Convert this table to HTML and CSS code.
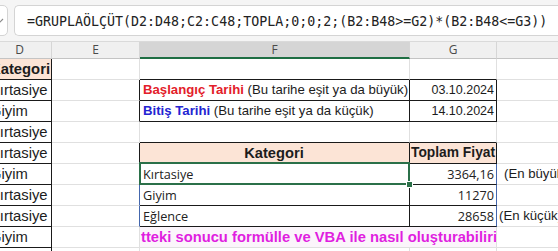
FILE: index.html
```html
<!DOCTYPE html>
<html lang="tr">
<head>
<meta charset="utf-8">
<title>Excel</title>
<link rel="stylesheet" href="styles.css">
</head>
<body>
<div class="app">
  <div class="topbar">
    <div class="namebox">
      <svg class="chev" width="8" height="8" viewBox="0 0 8 8"><polyline points="-3,2 1.5,6.5 6,2" fill="none" stroke="#8a8a8a" stroke-width="1.2"/></svg>
    </div>
    <div class="fbar">=GRUPLAÖLÇÜT(D2:D48;C2:C48;TOPLA;0;0;2;(B2:B48&gt;=G2)*(B2:B48&lt;=G3))</div>
  </div>
  <div class="sheet">
    <div class="hd">D</div>
    <div class="hd">E</div>
    <div class="hd sel">F</div>
    <div class="hd">G</div>
    <div class="hd"></div>

    <!-- row 1 -->
    <div class="c d peach b">Kategori</div>
    <div class="c"></div>
    <div class="c bbk"></div>
    <div class="c bbk"></div>
    <div class="c"></div>

    <!-- row 2 -->
    <div class="c d">Kırtasiye</div>
    <div class="c brk"></div>
    <div class="c bbk brk f"><span class="red b">Başlangıç Tarihi</span> (Bu tarihe eşit ya da büyük)</div>
    <div class="c bbk brk num date">03.10.2024</div>
    <div class="c"></div>

    <!-- row 3 -->
    <div class="c d">Giyim</div>
    <div class="c brk"></div>
    <div class="c bbk brk f"><span class="blue b">Bitiş Tarihi</span> (Bu tarihe eşit ya da küçük)</div>
    <div class="c bbk brk num date">14.10.2024</div>
    <div class="c"></div>

    <!-- row 4 -->
    <div class="c d">Kırtasiye</div>
    <div class="c"></div>
    <div class="c bbk"></div>
    <div class="c bbk"></div>
    <div class="c"></div>

    <!-- row 5 -->
    <div class="c d">Kırtasiye</div>
    <div class="c brk"></div>
    <div class="c bbk brk peach hdr center">Kategori</div>
    <div class="c bbk brk peach hdr small">Toplam Fiyat</div>
    <div class="c"></div>

    <!-- row 6 -->
    <div class="c d">Giyim</div>
    <div class="c brb"></div>
    <div class="c bbk brk res selcell">Kırtasiye<span class="selbox"><span class="handle"></span></span></div>
    <div class="c bbk brb res num">3364,16</div>
    <div class="c note wide">(En büyük)</div>

    <!-- row 7 -->
    <div class="c d">Kırtasiye</div>
    <div class="c brb"></div>
    <div class="c bbk brk res">Giyim</div>
    <div class="c bbk brb res num">11270</div>
    <div class="c"></div>

    <!-- row 8 -->
    <div class="c d">Kırtasiye</div>
    <div class="c brb"></div>
    <div class="c bbk brk res">Eğlence</div>
    <div class="c bbk brb res num">28658</div>
    <div class="c note">(En küçük)</div>

    <!-- row 9 -->
    <div class="c d">Giyim</div>
    <div class="c"></div>
    <div class="c span2 magenta">tteki sonucu formülle ve VBA ile nasıl oluşturabiliri</div>
    <div class="c"></div>

    <!-- row 10 -->
    <div class="c d">Giyim</div>
    <div class="c"></div>
    <div class="c"></div>
    <div class="c"></div>
    <div class="c"></div>
  </div>
</div>
</body>
</html>
```

FILE: styles.css
```css
* { box-sizing: border-box; }
html, body { margin: 0; padding: 0; }
body {
  width: 558px;
  height: 251px;
  overflow: hidden;
  background: #ffffff;
  font-family: "Liberation Sans", Arial, sans-serif;
  color: #1c1c1c;
}
.app { width: 558px; height: 251px; overflow: hidden; }

.topbar {
  height: 42px;
  background: #f5f5f5;
  border-bottom: 1px solid #dadada;
  display: flex;
  align-items: flex-start;
  gap: 6px;
  padding-top: 5px;
  margin-left: -30px;
}
.namebox {
  width: 38px;
  height: 31px;
  background: #ffffff;
  border: 1px solid #d4d4d4;
  border-radius: 5px;
  display: flex;
  align-items: center;
  justify-content: flex-end;
  padding-right: 2px;
}
.chev { display: block; margin-top: 1px; }
.fbar {
  flex: 1;
  height: 31px;
  background: #ffffff;
  border: 1px solid #d4d4d4;
  border-right: none;
  border-radius: 5px 0 0 5px;
  padding-left: 12px;
  font-family: "DejaVu Sans Mono", "Liberation Mono", monospace;
  font-size: 13.3px;
  line-height: 31px;
  color: #222;
  white-space: nowrap;
  overflow: hidden;
}

.sheet {
  display: grid;
  grid-template-columns: 64px 88px 270px 87px 80px;
  grid-template-rows: 17px repeat(10, 21px);
  margin-left: -12px;
}
.hd {
  background: #f0f0f0;
  border-right: 1px solid #d6d6d6;
  border-bottom: 1px solid #c4c4c4;
  font-family: "Open Sans", "Noto Sans", sans-serif;
  font-size: 12px;
  line-height: 16px;
  color: #4a4a4a;
  text-align: center;
}
.hd.sel {
  background: #d5d5d5;
  border-bottom: 2px solid #1f6e43;
}
.c {
  position: relative;
  border-right: 1px solid #e0e0e0;
  border-bottom: 1px solid #e0e0e0;
  font-size: 13.2px;
  line-height: 20px;
  white-space: nowrap;
  overflow: hidden;
  padding: 0 3px;
}
.d {
  border-right: 1px solid #1a1a1a;
  border-bottom: 1px solid #1a1a1a;
  font-size: 14.8px;
  padding-left: 2px;
}
.bbk { border-bottom-color: #1a1a1a; }
.brk { border-right-color: #1a1a1a; }
.brb { border-right-color: #4467ad; }
.peach { background: #fce4d6; }
.b { font-weight: bold; }
.red { color: #e3202a; }
.blue { color: #2424d2; }
.num { text-align: right; padding-right: 2px; }
.date { font-size: 12.5px; }
.hdr { font-weight: bold; font-size: 14.7px; padding-left: 2px; }
.hdr.small { font-size: 13.8px; padding-left: 1px; }
.center { text-align: center; }
.res {
  font-family: "Open Sans", "Noto Sans", sans-serif;
  font-size: 12.7px;
  color: #222;
}
.note { font-size: 13.2px; padding-left: 2px; }
.note.wide { padding-left: 7px; }
.selcell { overflow: visible; z-index: 2; }
.selbox {
  position: absolute;
  left: -1px;
  top: -2px;
  right: -1px;
  bottom: -1px;
  border: 2px solid #2b7049;
}
.handle {
  position: absolute;
  right: -5px;
  bottom: -5px;
  width: 7px;
  height: 7px;
  background: #2b7049;
  border: 1px solid #ffffff;
}
.span2 { grid-column: span 2; }
.magenta {
  background: #fbf5fb;
  color: #e01ee0;
  font-weight: bold;
  font-size: 14.75px;
  padding-left: 1px;
}
```
